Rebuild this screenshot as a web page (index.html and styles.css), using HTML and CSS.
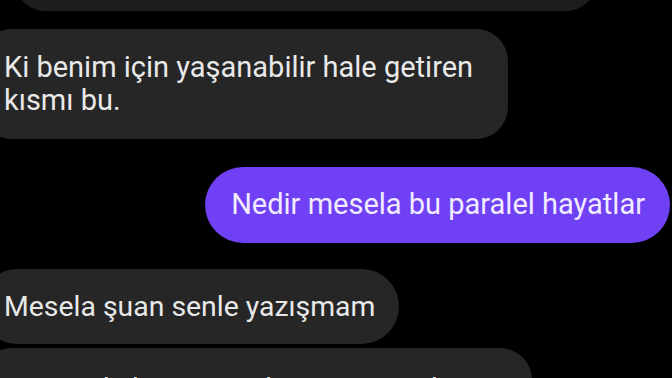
FILE: index.html
```html
<!DOCTYPE html>
<html>
<head>
	<meta charset="utf-8">
	<title>chat</title>
	<link rel="stylesheet" href="styles.css">
</head>
<body>
	<div id='chat'>
		<div class='msg theirs prev'></div>
		<div class='msg theirs first wrapped'>Ki benim için yaşanabilir hale getiren<br>kısmı bu.</div>
		<div class='msg mine'>Nedir mesela bu paralel hayatlar</div>
		<div class='msg theirs first pill'>Mesela şuan senle yazışmam</div>
		<div class='msg theirs next'>Benim de hayatımın bir parçası gibi geliyor bana</div>
	</div>
</body>
</html>
```

FILE: styles.css
```css
body {
	margin: 0;
	background-color: #000;
	height: 378px;
	overflow: hidden;
	font-family: Roboto, "Noto Sans", sans-serif;
}

#chat {
	display: flex;
	flex-direction: column;
	align-items: flex-start;
}

.msg {
	font-size: 29px;
	line-height: 33px;
	padding: 22px 24px;
	border-radius: 32px;
	max-width: 504px;
	box-sizing: content-box;
}

.theirs {
	background-color: #262626;
	color: #e9e9e9;
	margin-left: -20px;
}

.prev {
	background-color: #1d1d1d;
	margin-left: 15px;
	width: 533px;
	max-width: none;
	height: 17px;
	margin-top: -50px;
	border-radius: 30px;
}

.first {
	margin-top: 18px;
}

.wrapped {
	padding-right: 35px;
}

.pill {
	margin-top: 26px;
	border-radius: 38px;
	padding-top: 21px;
	padding-bottom: 21px;
	font-size: 28.4px;
}

.next {
	margin-top: 4px;
	padding-top: 25px;
}

.mine {
	align-self: flex-end;
	margin-top: 28px;
	margin-right: 2px;
	padding: 21px 25px 22px 26px;
	border-radius: 38px;
	background-color: #7040f4;
	color: #f1ecff;
}
```
